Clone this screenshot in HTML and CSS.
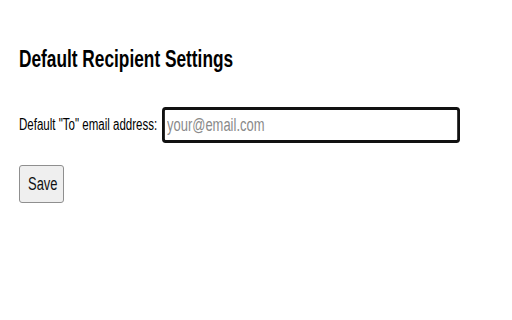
FILE: index.html
```html
<!DOCTYPE html>
<html lang="en">
  <head>
    <meta charset="UTF-8" />
    <title>Default Recipient Settings</title>
    <link rel="stylesheet" href="styles.css">
  </head>
  <body>
    <div class="page">
      <h1 class="title"><span class="squeeze">Default Recipient Settings</span></h1>
      <div class="field">
        <label for="to-email" class="label"><span class="squeeze">Default "To" email address:</span></label>
        <div class="email-wrap">
          <input type="email" id="to-email" class="email" placeholder="your@email.com" />
        </div>
      </div>
      <button class="save"><span class="squeeze">Save</span></button>
    </div>
  </body>
</html>
```

FILE: styles.css
```css
body {
  margin: 0;
  background: #fff;
  font-family: "Liberation Sans", Arial, sans-serif;
  color: #000;
}

.page {
  padding: 45px 0 0 19px;
  display: flex;
  flex-direction: column;
  align-items: flex-start;
}

/* the screenshot is squeezed sideways, so every text run is too */
.squeeze {
  display: inline-block;
  transform: scaleX(0.72);
  transform-origin: 0 50%;
  white-space: nowrap;
}

.title {
  margin: 0;
  width: 215px;
  font-size: 24px;
  line-height: 28px;
  font-weight: bold;
}

.field {
  display: flex;
  align-items: center;
  gap: 4px;
  margin-top: 34px;
}

.label {
  width: 139px;
  font-size: 16px;
}

.email-wrap {
  width: 298px;
  height: 36px;
  overflow: hidden;
}

.email {
  width: 414px;
  height: 36px;
  box-sizing: border-box;
  border: 3px solid #111;
  border-left-width: 4px;
  border-right-width: 4px;
  border-radius: 5px / 4px;
  padding: 0 3px;
  font-family: "Liberation Sans", Arial, sans-serif;
  font-size: 18px;
  outline: none;
  transform: scaleX(0.72);
  transform-origin: 0 0;
}

.email::placeholder {
  color: #8a8a8a;
}

.save {
  margin-top: 22px;
  width: 45px;
  height: 38px;
  font-family: "Liberation Sans", Arial, sans-serif;
  font-size: 18px;
  color: #111;
  background: #efefef;
  border: 1px solid #8f8f8f;
  border-radius: 3px;
  padding: 0 0 0 8px;
  text-align: left;
}
```
